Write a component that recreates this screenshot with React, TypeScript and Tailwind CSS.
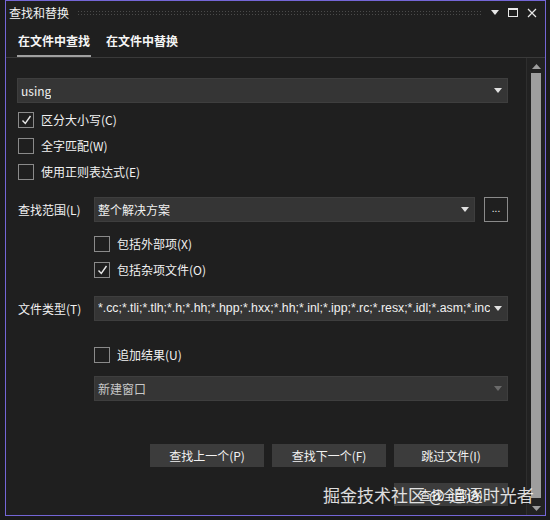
import React from "react";

const font = { fontFamily: '"Noto Sans CJK SC", "Noto Sans", sans-serif' };

const Arrow = ({ dim = false }: { dim?: boolean }) => (
  <svg width="8" height="5" viewBox="0 0 8 5" className="shrink-0">
    <path d="M0 0h8L4 5z" fill={dim ? "#6a6a6a" : "#e0e0e0"} />
  </svg>
);

const Combo = ({
  text,
  dim = false,
  className = "",
  textClass = "text-[12px]",
}: {
  text: string;
  dim?: boolean;
  className?: string;
  textClass?: string;
}) => (
  <div
    className={`h-[25px] flex items-center justify-between pl-[3px] pr-[5px] bg-[#353535] border border-[#3e3e3e] ${className}`}
  >
    <span
      className={`whitespace-nowrap overflow-hidden ${dim ? "text-[#c8c8c8]" : "text-[#f1f1f1]"} ${textClass}`}
    >
      {text}
    </span>
    <Arrow dim={dim} />
  </div>
);

const Check = ({ label, checked = false }: { label: string; checked?: boolean }) => (
  <div className="h-[26px] flex items-center gap-[7px]">
    <div className="w-[16px] h-[16px] border border-[#8a8a8a] flex items-center justify-center">
      {checked && (
        <svg width="11" height="10" viewBox="0 0 11 10">
          <path d="M1.5 5.5l2.8 3L9.5 1" stroke="#e8e8e8" strokeWidth="1.4" fill="none" />
        </svg>
      )}
    </div>
    <span className="text-[12px] text-[#f1f1f1]">{label}</span>
  </div>
);

const Btn = ({ label }: { label: string }) => (
  <button className="w-[114px] h-[23px] bg-[#3c3c3c] text-[12px] text-[#f1f1f1] flex items-center justify-center">
    {label}
  </button>
);

export default function App() {
  return (
    <div className="w-[550px] h-[520px] bg-[#1b1b1b] relative overflow-hidden" style={font}>
      <div className="ml-[5px] w-[541px] h-[516px] border border-[#7466d6] bg-[#1f1f1f] flex flex-col">
        {/* title bar */}
        <div className="h-[23px] flex items-center pl-[3px] pr-[8px] shrink-0">
          <span className="text-[12px] text-[#f1f1f1]">查找和替换</span>
          <div className="flex-1 mx-[8px] h-[5px] bg-[radial-gradient(#4a4a4a_0.8px,transparent_0.9px)] bg-[length:3px_3px]" />
          <div className="flex items-center gap-[9px]">
            <svg width="8" height="5" viewBox="0 0 8 5">
              <path d="M0 0h8L4 5z" fill="#e8e8e8" />
            </svg>
            <svg width="10" height="9" viewBox="0 0 10 9">
              <rect x="0.5" y="0.5" width="9" height="8" fill="none" stroke="#e8e8e8" />
              <rect x="0" y="0" width="10" height="2" fill="#e8e8e8" />
            </svg>
            <svg width="10" height="10" viewBox="0 0 10 10">
              <path d="M1 1l8 8M9 1l-8 8" stroke="#e8e8e8" strokeWidth="1.2" />
            </svg>
          </div>
        </div>

        {/* tabs */}
        <div className="h-[34px] flex items-end gap-[15px] pl-[11px] border-b border-[#3a3a3a] shrink-0">
          <div className="h-full flex flex-col justify-between">
            <span className="pt-[8px] text-[12px] font-bold text-[#f5f5f5] px-[1px]">在文件中查找</span>
            <div className="h-[2px] bg-[#a0a0a0]" />
          </div>
          <div className="h-full">
            <span className="block pt-[8px] text-[12px] font-bold text-[#f5f5f5]">在文件中替换</span>
          </div>
        </div>

        {/* body */}
        <div className="flex-1 flex min-h-0">
          <div className="flex-1 overflow-hidden pl-[11px] pr-[18px] pt-[20px] border-r border-[#2e2e2e]">
            <Combo text="using" />
            <div className="mt-[4px] pl-[1px]">
              <Check label="区分大小写(C)" checked />
              <Check label="全字匹配(W)" />
              <Check label="使用正则表达式(E)" />
            </div>

            <div className="mt-[12px] flex items-center">
              <span className="w-[77px] pl-[1px] text-[12px] text-[#f1f1f1]">查找范围(L)</span>
              <Combo text="整个解决方案" className="flex-1" />
              <div className="ml-[9px] w-[24px] h-[25px] border border-[#8a8a8a] flex items-center justify-center text-[10px] text-[#e8e8e8] leading-none pb-[3px]">
                ...
              </div>
            </div>

            <div className="mt-[9px] pl-[77px]">
              <Check label="包括外部项(X)" />
              <Check label="包括杂项文件(O)" checked />
            </div>

            <div className="mt-[13px] flex items-center">
              <span className="w-[77px] pl-[1px] text-[12px] text-[#f1f1f1]">文件类型(T)</span>
              <Combo
                text="*.cc;*.tli;*.tlh;*.h;*.hh;*.hpp;*.hxx;*.hh;*.inl;*.ipp;*.rc;*.resx;*.idl;*.asm;*.inc"
                className="flex-1 min-w-0"
                textClass="text-[12.3px] font-['Liberation_Sans',sans-serif]"
              />
            </div>

            <div className="mt-[21px] pl-[77px]">
              <Check label="追加结果(U)" />
              <Combo text="新建窗口" dim className="mt-[8px]" />
            </div>

            <div className="mt-[43px] flex justify-end gap-[8px]">
              <Btn label="查找上一个(P)" />
              <Btn label="查找下一个(F)" />
              <Btn label="跳过文件(I)" />
            </div>
            <div className="mt-[16px] flex justify-end">
              <Btn label="查找全部(A)" />
            </div>
          </div>

          {/* scrollbar */}
          <div className="w-[18px] bg-[#222222] flex flex-col items-center pt-[6px] pb-[4px]">
            <svg width="9" height="5" viewBox="0 0 9 5">
              <path d="M0 5h9L4.5 0z" fill="#9e9e9e" />
            </svg>
            <div className="mt-[4px] w-[10px] flex-1 bg-[#9e9e9e]" />
            <svg className="mt-[8px]" width="9" height="5" viewBox="0 0 9 5">
              <path d="M0 0h9L4.5 5z" fill="#9e9e9e" />
            </svg>
          </div>
        </div>
      </div>

      {/* watermark */}
      <span className="absolute left-[323px] top-[482px] text-[17px] text-white/85 whitespace-nowrap">
        掘金技术社区 @ 追逐时光者
      </span>
    </div>
  );
}
